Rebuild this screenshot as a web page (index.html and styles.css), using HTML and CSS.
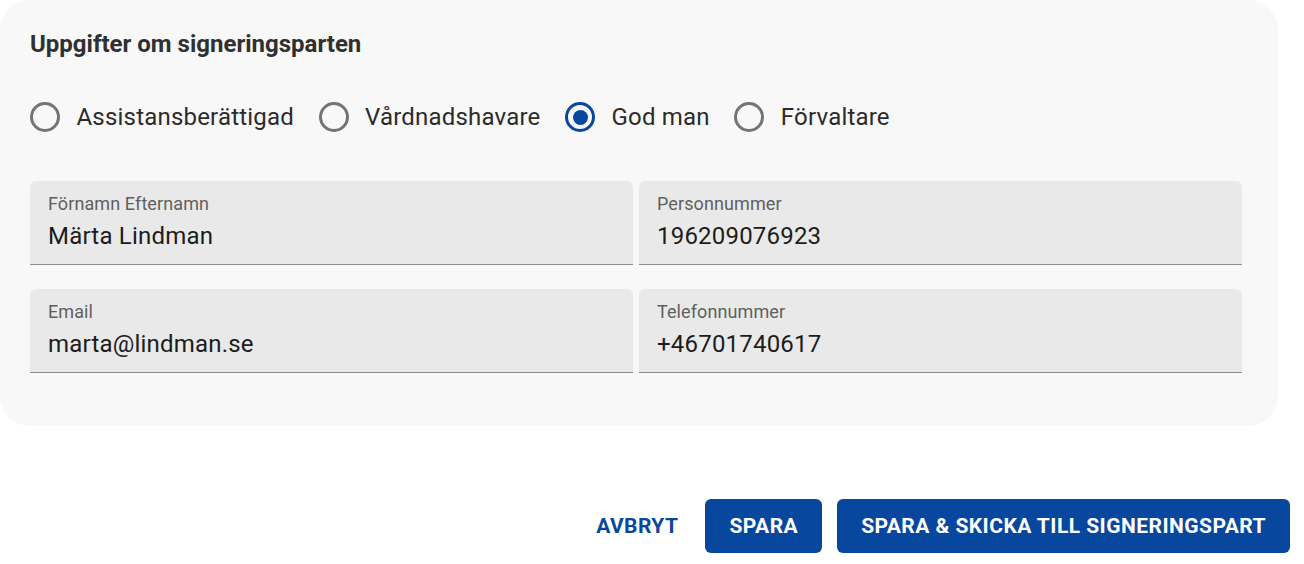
FILE: index.html
```html
<!DOCTYPE html>
<html lang="sv">
<head>
<meta charset="utf-8">
<title>Uppgifter om signeringsparten</title>
<link rel="stylesheet" href="styles.css">
</head>
<body>
<div class="page">
  <section class="card">
    <h2 class="title">Uppgifter om signeringsparten</h2>
    <div class="radio-group">
      <label class="option"><span class="radio"></span><span class="option-text">Assistansberättigad</span></label>
      <label class="option"><span class="radio"></span><span class="option-text">Vårdnadshavare</span></label>
      <label class="option"><span class="radio checked"></span><span class="option-text">God man</span></label>
      <label class="option"><span class="radio"></span><span class="option-text">Förvaltare</span></label>
    </div>
    <div class="fields">
      <div class="field"><div class="field-label">Förnamn Efternamn</div><div class="field-value">Märta Lindman</div></div>
      <div class="field"><div class="field-label">Personnummer</div><div class="field-value">196209076923</div></div>
      <div class="field"><div class="field-label">Email</div><div class="field-value">marta@lindman.se</div></div>
      <div class="field"><div class="field-label">Telefonnummer</div><div class="field-value">+46701740617</div></div>
    </div>
  </section>
  <div class="actions">
    <button class="btn btn-text">Avbryt</button>
    <button class="btn btn-primary">Spara</button>
    <button class="btn btn-primary">Spara &amp; skicka till signeringspart</button>
  </div>
</div>
</body>
</html>
```
FILE: styles.css
```css
* { box-sizing: border-box; }
html, body { margin: 0; padding: 0; background: #ffffff; }
body { font-family: Roboto, "Noto Sans", "Liberation Sans", sans-serif; }

.page { width: 1304px; height: 564px; }

.card {
  width: 1278px;
  background: #f8f8f8;
  border-radius: 30px;
  padding: 30px 36px 53px 30px;
}

.title {
  margin: 0;
  font-size: 24px;
  line-height: 28px;
  font-weight: 700;
  color: #303030;
}

.radio-group {
  display: flex;
  align-items: center;
  height: 36px;
  margin-top: 41px;
}

.option {
  display: flex;
  align-items: center;
  margin-right: 24.5px;
}

.radio {
  width: 30px;
  height: 30px;
  border-radius: 50%;
  border: 3px solid #737373;
  margin-right: 16.5px;
  display: flex;
  align-items: center;
  justify-content: center;
}

.radio.checked { border-color: #07479e; }
.radio.checked::after {
  content: "";
  width: 15px;
  height: 15px;
  border-radius: 50%;
  background: #07479e;
}

.option-text {
  font-size: 24px;
  line-height: 36px;
  color: #2b2b2b;
  letter-spacing: 0.2px;
}

.fields {
  display: grid;
  grid-template-columns: 603px 603px;
  column-gap: 6px;
  row-gap: 24px;
  margin-top: 46px;
}

.field {
  height: 84px;
  background: #e9e9e9;
  border-radius: 6px 6px 0 0;
  border-bottom: 1px solid #8e8e8e;
  padding: 10px 18px 0;
}

.field-label {
  font-size: 18px;
  line-height: 26px;
  color: #5f5f5f;
  letter-spacing: 0.1px;
}

.field-value {
  margin-top: 2px;
  font-size: 24px;
  line-height: 34px;
  color: #1c1c1c;
  letter-spacing: 0.2px;
}

.actions {
  display: flex;
  justify-content: flex-end;
  align-items: center;
  gap: 15px;
  margin-top: 73px;
  padding-right: 14px;
}

.btn {
  font-family: inherit;
  font-size: 21px;
  font-weight: 700;
  text-transform: uppercase;
  letter-spacing: 0.45px;
  height: 54px;
  border: none;
  border-radius: 6px;
  padding: 0 24px;
  cursor: pointer;
}

.btn-text {
  background: transparent;
  color: #07479e;
  padding: 0 12px;
}

.btn-primary {
  background: #07479e;
  color: #ffffff;
}
```
